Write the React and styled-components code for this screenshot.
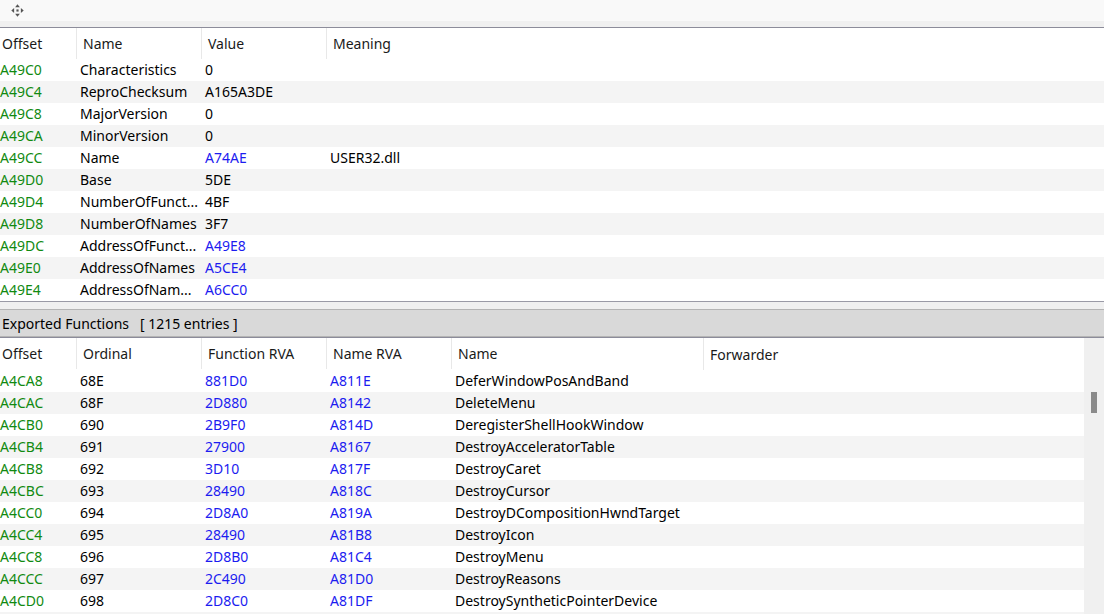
import React from "react";
import styled, { createGlobalStyle } from "styled-components";

const Global = createGlobalStyle`
  html, body { margin: 0; padding: 0; background: #fff; }
  body { font-family: "Noto Sans", "Open Sans", sans-serif; font-size: 14px; color: #000; overflow: hidden; }
  #root { width: 1104px; height: 614px; overflow: hidden; }
`;

const Page = styled.div`
  width: 1104px;
  height: 614px;
  display: flex;
  flex-direction: column;
  overflow: hidden;
`;

const Toolbar = styled.div`
  height: 21px;
  background: #f9f9f9;
  display: flex;
  align-items: center;
  padding-left: 11px;
  flex-shrink: 0;
`;

const ToolStrip = styled.div`
  height: 6px;
  background: #f0f0f0;
  border-bottom: 1px solid #8c8c9a;
  flex-shrink: 0;
`;

const Table = styled.div`
  display: flex;
  flex-direction: column;
  flex-shrink: 0;
`;

const HeaderRow = styled.div`
  display: grid;
  grid-template-columns: ${(p) => p.cols};
  height: ${(p) => p.h}px;
  background: #fff;
  flex-shrink: 0;
`;

const HeaderCell = styled.div`
  display: flex;
  align-items: center;
  padding-left: ${(p) => (p.first ? 2 : 6)}px;
  padding-bottom: ${(p) => p.pb}px;
  border-left: ${(p) => (p.first ? "none" : "1px solid #e8e8e8")};
  height: ${(p) => p.h}px;
  box-sizing: border-box;
  white-space: nowrap;
  color: #1a1a1a;
`;

const Row = styled.div`
  display: grid;
  grid-template-columns: ${(p) => p.cols};
  height: 22px;
  flex-shrink: 0;
  background: ${(p) => (p.odd ? "#f4f4f4" : "#fff")};
`;

const Cell = styled.div`
  display: flex;
  align-items: center;
  padding-left: ${(p) => (p.first ? 0 : 4)}px;
  padding-bottom: 2px;
  box-sizing: border-box;
  white-space: nowrap;
  overflow: hidden;
  color: ${(p) => (p.kind === "off" ? "#118a11" : p.kind === "link" ? "#1c1cf0" : "#000")};
`;

const Divider = styled.div`
  height: 7px;
  border-top: 1px solid #9a9aa6;
  background: #f0f0f0;
  flex-shrink: 0;
`;

const Section = styled.div`
  height: 26px;
  background: #d9d9d9;
  border-top: 1px solid #b4b4b4;
  border-bottom: 1px solid #b4b4b4;
  display: flex;
  align-items: center;
  padding-left: 2px;
  white-space: pre;
  flex-shrink: 0;
`;

const SectionGap = styled.div`
  height: 0;
  border-bottom: 1px solid #8c8c9a;
  flex-shrink: 0;
`;

const Lower = styled.div`
  display: flex;
  flex: 1;
  min-height: 0;
  overflow: hidden;
`;

const LowerTable = styled(Table)`
  width: 1084px;
  overflow: hidden;
`;

const Scrollbar = styled.div`
  width: 20px;
  background: #f0f0f0;
  position: relative;
`;

const Thumb = styled.div`
  position: absolute;
  left: 7px;
  top: 54px;
  width: 6px;
  height: 21px;
  background: #8a8a8a;
`;

const MoveIcon = () => (
  <svg width="13" height="13" viewBox="0 0 12 12">
    <g fill="#555">
      <path d="M6 0.3 L8.2 2.9 L3.8 2.9 Z" />
      <path d="M6 11.7 L8.2 9.1 L3.8 9.1 Z" />
      <path d="M0.3 6 L2.9 3.8 L2.9 8.2 Z" />
      <path d="M11.7 6 L9.1 3.8 L9.1 8.2 Z" />
      <rect x="5" y="5" width="2" height="2" />
    </g>
  </svg>
);

const topCols = "76px 125px 125px 1fr";
const topHead = ["Offset", "Name", "Value", "Meaning"];
const topRows = [
  ["A49C0", "Characteristics", "0", ""],
  ["A49C4", "ReproChecksum", "A165A3DE", ""],
  ["A49C8", "MajorVersion", "0", ""],
  ["A49CA", "MinorVersion", "0", ""],
  ["A49CC", "Name", "A74AE", "USER32.dll", true],
  ["A49D0", "Base", "5DE", ""],
  ["A49D4", "NumberOfFunct...", "4BF", ""],
  ["A49D8", "NumberOfNames", "3F7", ""],
  ["A49DC", "AddressOfFunct...", "A49E8", "", true],
  ["A49E0", "AddressOfNames", "A5CE4", "", true],
  ["A49E4", "AddressOfNam...", "A6CC0", "", true],
];

const lowCols = "76px 125px 125px 125px 252px 1fr";
const lowHead = ["Offset", "Ordinal", "Function RVA", "Name RVA", "Name", "Forwarder"];
const lowRows = [
  ["A4CA8", "68E", "881D0", "A811E", "DeferWindowPosAndBand"],
  ["A4CAC", "68F", "2D880", "A8142", "DeleteMenu"],
  ["A4CB0", "690", "2B9F0", "A814D", "DeregisterShellHookWindow"],
  ["A4CB4", "691", "27900", "A8167", "DestroyAcceleratorTable"],
  ["A4CB8", "692", "3D10", "A817F", "DestroyCaret"],
  ["A4CBC", "693", "28490", "A818C", "DestroyCursor"],
  ["A4CC0", "694", "2D8A0", "A819A", "DestroyDCompositionHwndTarget"],
  ["A4CC4", "695", "28490", "A81B8", "DestroyIcon"],
  ["A4CC8", "696", "2D8B0", "A81C4", "DestroyMenu"],
  ["A4CCC", "697", "2C490", "A81D0", "DestroyReasons"],
  ["A4CD0", "698", "2D8C0", "A81DF", "DestroySyntheticPointerDevice"],
];

export default function App() {
  return (
    <Page>
      <Global />
      <Toolbar>
        <MoveIcon />
      </Toolbar>
      <ToolStrip />
      <Table>
        <HeaderRow cols={topCols} h={31}>
          {topHead.map((h, i) => (
            <HeaderCell key={h} first={i === 0} h={31} pb={1}>{h}</HeaderCell>
          ))}
        </HeaderRow>
        {topRows.map((r, i) => (
          <Row key={r[0]} cols={topCols} odd={i % 2 === 1}>
            <Cell first kind="off">{r[0]}</Cell>
            <Cell>{r[1]}</Cell>
            <Cell kind={r[4] ? "link" : undefined}>{r[2]}</Cell>
            <Cell>{r[3]}</Cell>
          </Row>
        ))}
      </Table>
      <Divider />
      <Section>{"Exported Functions   [ 1215 entries ]"}</Section>
      <SectionGap />
      <Lower>
        <LowerTable>
          <HeaderRow cols={lowCols} h={32}>
            {lowHead.map((h, i) => (
              <HeaderCell key={h} first={i === 0} h={i > 4 ? 32 : 31} pb={0}>{h}</HeaderCell>
            ))}
          </HeaderRow>
          {lowRows.map((r, i) => (
            <Row key={r[0]} cols={lowCols} odd={i % 2 === 1}>
              <Cell first kind="off">{r[0]}</Cell>
              <Cell>{r[1]}</Cell>
              <Cell kind="link">{r[2]}</Cell>
              <Cell kind="link">{r[3]}</Cell>
              <Cell>{r[4]}</Cell>
              <Cell />
            </Row>
          ))}
          <Row cols={lowCols} odd />
        </LowerTable>
        <Scrollbar>
          <Thumb />
        </Scrollbar>
      </Lower>
    </Page>
  );
}
